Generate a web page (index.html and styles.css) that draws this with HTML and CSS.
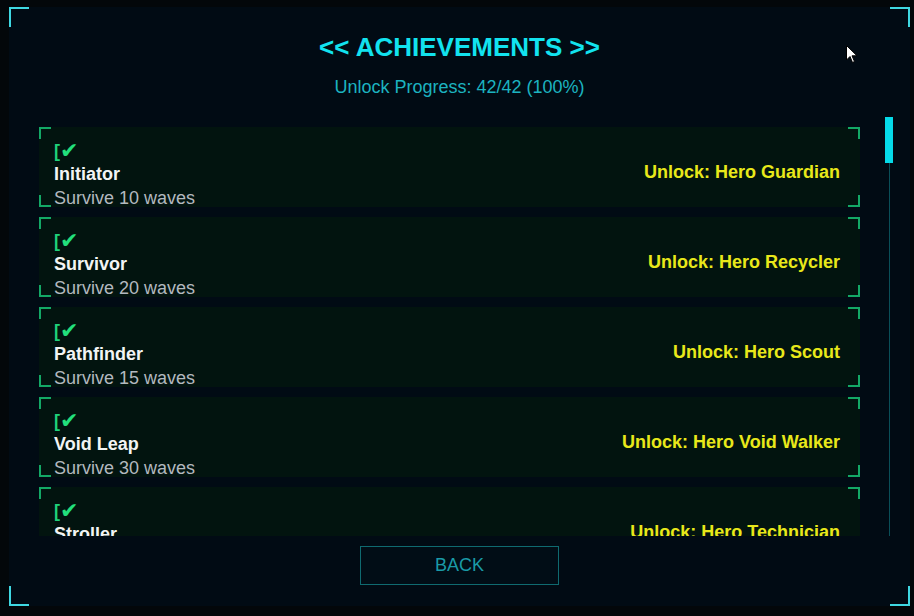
FILE: index.html
```html
<!DOCTYPE html>
<html>
<head>
<meta charset="utf-8">
<link rel="stylesheet" href="styles.css">
</head>
<body>
<div class="panel">
  <span class="corner tl"></span><span class="corner tr"></span>
  <span class="corner bl"></span><span class="corner br"></span>
  <h1 class="title">&lt;&lt; ACHIEVEMENTS &gt;&gt;</h1>
  <p class="progress">Unlock Progress: 42/42 (100%)</p>
  <div class="list-area">
    <div class="viewport">
      <div class="row">
        <div class="info">
          <div class="check">[<span class="tick">✔</span></div>
          <div class="name">Initiator</div>
          <div class="desc">Survive 10 waves</div>
        </div>
        <div class="reward">Unlock: Hero Guardian</div>
      </div>
      <div class="row">
        <div class="info">
          <div class="check">[<span class="tick">✔</span></div>
          <div class="name">Survivor</div>
          <div class="desc">Survive 20 waves</div>
        </div>
        <div class="reward">Unlock: Hero Recycler</div>
      </div>
      <div class="row">
        <div class="info">
          <div class="check">[<span class="tick">✔</span></div>
          <div class="name">Pathfinder</div>
          <div class="desc">Survive 15 waves</div>
        </div>
        <div class="reward">Unlock: Hero Scout</div>
      </div>
      <div class="row">
        <div class="info">
          <div class="check">[<span class="tick">✔</span></div>
          <div class="name">Void Leap</div>
          <div class="desc">Survive 30 waves</div>
        </div>
        <div class="reward">Unlock: Hero Void Walker</div>
      </div>
      <div class="row">
        <div class="info">
          <div class="check">[<span class="tick">✔</span></div>
          <div class="name">Stroller</div>
          <div class="desc">Survive 25 waves</div>
        </div>
        <div class="reward">Unlock: Hero Technician</div>
      </div>
    </div>
    <div class="scrollbar"><div class="thumb"></div></div>
  </div>
  <div class="footer"><button class="back">BACK</button></div>
</div>
<svg class="cursor" width="12" height="19" viewBox="0 0 12 19"><path d="M0.5 0.5 L0.5 15 L4 11.5 L6.5 17.5 L8.5 16.5 L6 10.8 L11 10.8 Z" fill="#ffffff" stroke="#000000" stroke-width="1"/></svg>
</body>
</html>
```
FILE: styles.css
```css
html, body {
  margin: 0;
  padding: 0;
}
body {
  background: #03070a;
  width: 914px;
  height: 616px;
  overflow: hidden;
  font-family: "Liberation Sans", Arial, sans-serif;
  position: relative;
}
.panel {
  position: relative;
  margin: 7px 4px 0 9px;
  width: 901px;
  height: 599px;
  background: #010b14;
  box-sizing: border-box;
  padding: 26px 0 0 30px;
  display: flex;
  flex-direction: column;
}
.corner {
  position: absolute;
  width: 20px;
  height: 20px;
  border-color: #3fd8e2;
  border-style: solid;
  border-width: 0;
  box-sizing: border-box;
}
.corner.tl { left: 0; top: 0; border-left-width: 2px; border-top-width: 2px; }
.corner.tr { right: 0; top: 0; border-right-width: 2px; border-top-width: 2px; }
.corner.bl { left: 0; bottom: 0; border-left-width: 2px; border-bottom-width: 2px; }
.corner.br { right: 0; bottom: 0; border-right-width: 2px; border-bottom-width: 2px; }
.title {
  margin: 0 30px 0 0;
  text-align: center;
  font-size: 26px;
  line-height: 28px;
  font-weight: bold;
  color: #12e3ef;
}
.progress {
  margin: 15px 30px 0 0;
  text-align: center;
  font-size: 18px;
  line-height: 22px;
  color: #1cb3c0;
}
.list-area {
  margin-top: 19px;
  height: 419px;
  display: flex;
  gap: 25px;
}
.viewport {
  width: 821px;
  height: 419px;
  overflow: hidden;
  padding-top: 10px;
  box-sizing: border-box;
  display: flex;
  flex-direction: column;
  gap: 10px;
}
.row {
  --g: #13a866;
  flex: 0 0 80px;
  height: 80px;
  box-sizing: border-box;
  padding: 13px 20px 0 15px;
  display: flex;
  justify-content: space-between;
  align-items: flex-start;
  background:
    linear-gradient(var(--g), var(--g)) left top / 12px 2px no-repeat,
    linear-gradient(var(--g), var(--g)) left top / 2px 12px no-repeat,
    linear-gradient(var(--g), var(--g)) right top / 12px 2px no-repeat,
    linear-gradient(var(--g), var(--g)) right top / 2px 12px no-repeat,
    linear-gradient(var(--g), var(--g)) left bottom / 12px 2px no-repeat,
    linear-gradient(var(--g), var(--g)) left bottom / 2px 12px no-repeat,
    linear-gradient(var(--g), var(--g)) right bottom / 12px 2px no-repeat,
    linear-gradient(var(--g), var(--g)) right bottom / 2px 12px no-repeat,
    #02140f;
}
.info {
  display: flex;
  flex-direction: column;
}
.check {
  height: 22px;
  font-size: 18px;
  line-height: 22px;
  font-weight: bold;
  color: #1fd27a;
  display: flex;
  align-items: center;
}
.tick {
  font-family: "DejaVu Sans", sans-serif;
  font-size: 22px;
  line-height: 22px;
  margin-left: 0;
  color: #22e07c;
}
.name {
  font-size: 18px;
  line-height: 24px;
  font-weight: bold;
  color: #f2f4f4;
}
.desc {
  font-size: 18px;
  line-height: 24px;
  color: #b3b9bf;
}
.reward {
  margin-top: 20px;
  font-size: 18px;
  line-height: 24px;
  font-weight: bold;
  color: #e8e81a;
}
.scrollbar {
  width: 8px;
  height: 419px;
  position: relative;
  display: flex;
  justify-content: center;
  background: linear-gradient(#0a4f58, #0a4f58) center / 1px 100% no-repeat;
}
.thumb {
  width: 8px;
  height: 46px;
  background: #05dbe9;
}
.footer {
  margin-top: 10px;
  display: flex;
  justify-content: center;
  padding-right: 30px;
}
.back {
  width: 199px;
  height: 39px;
  background: #010d16;
  border: 1px solid #0f6a70;
  color: #1a9aa7;
  font-family: "Liberation Sans", Arial, sans-serif;
  font-size: 18px;
  padding: 0 0 0 0;
  margin: 0;
}
.cursor {
  position: absolute;
  left: 846px;
  top: 45px;
}
```
